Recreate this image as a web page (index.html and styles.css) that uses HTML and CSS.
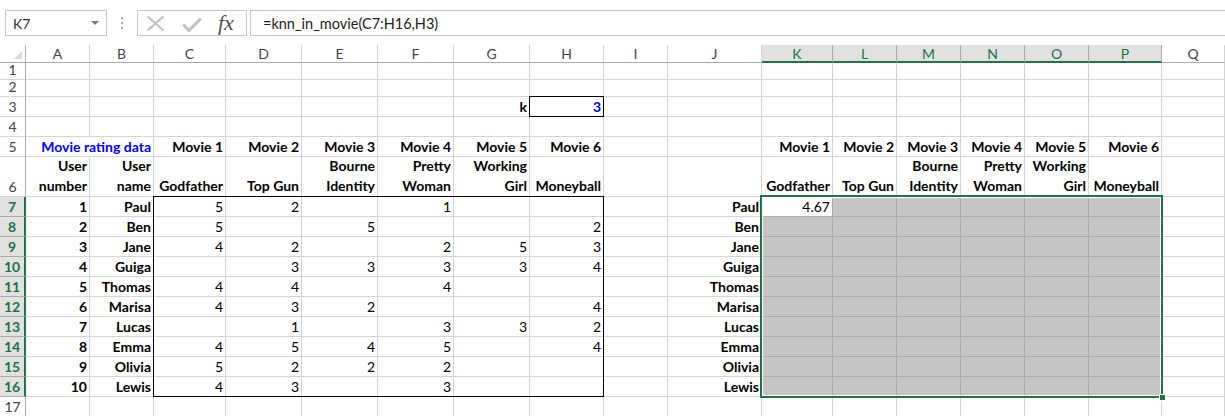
FILE: index.html
```html
<!DOCTYPE html>
<html>
<head>
<meta charset="utf-8">
<link rel="stylesheet" href="styles.css">
</head>
<body>
<div class="topbar">
  <div class="namebox"><span>K7</span><span class="dd"></span></div>
  <div class="dots"><svg width="4" height="26" viewBox="0 0 4 26"><rect x="1" y="7" width="2" height="2" fill="#a8a8a8"/><rect x="1" y="12" width="2" height="2" fill="#a8a8a8"/><rect x="1" y="17" width="2" height="2" fill="#a8a8a8"/></svg></div>
  <div class="fbtns">
    <svg class="fbicons" width="70" height="24" viewBox="0 0 70 24"><path d="M9.5 5.5 L25.5 19.5 M25.5 5.5 L9.5 19.5" stroke="#c2c2c2" stroke-width="2.2" fill="none"/><path d="M45 13.5 L51 19.5 L63 7.5" stroke="#c2c2c2" stroke-width="3" fill="none"/></svg>
    <span class="fx">fx</span>
  </div>
  <div class="formula">=knn_in_movie(C7:H16,H3)</div>
</div>
<div class="sheet">
  <div class="corner"><svg width="10" height="10" viewBox="0 0 10 10"><path d="M9 1 L9 9 L1 9 Z" fill="#dcdcdc"/></svg></div>
  <div class="ch">A</div><div class="ch">B</div><div class="ch">C</div><div class="ch">D</div><div class="ch">E</div><div class="ch">F</div><div class="ch">G</div><div class="ch">H</div><div class="ch">I</div><div class="ch">J</div><div class="ch on">K</div><div class="ch on">L</div><div class="ch on">M</div><div class="ch on">N</div><div class="ch on">O</div><div class="ch on">P</div><div class="ch">Q</div>

  <div class="rh">1</div><div class="c"></div><div class="c"></div><div class="c"></div><div class="c"></div><div class="c"></div><div class="c"></div><div class="c"></div><div class="c"></div><div class="c"></div><div class="c"></div><div class="c"></div><div class="c"></div><div class="c"></div><div class="c"></div><div class="c"></div><div class="c"></div><div class="c"></div>

  <div class="rh">2</div><div class="c"></div><div class="c"></div><div class="c"></div><div class="c"></div><div class="c"></div><div class="c"></div><div class="c"></div><div class="c"></div><div class="c"></div><div class="c"></div><div class="c"></div><div class="c"></div><div class="c"></div><div class="c"></div><div class="c"></div><div class="c"></div><div class="c"></div>

  <div class="rh">3</div><div class="c"></div><div class="c"></div><div class="c"></div><div class="c"></div><div class="c"></div><div class="c"></div><div class="c b">k</div><div class="c b blue">3</div><div class="c"></div><div class="c"></div><div class="c"></div><div class="c"></div><div class="c"></div><div class="c"></div><div class="c"></div><div class="c"></div><div class="c"></div>

  <div class="rh">4</div><div class="c"></div><div class="c"></div><div class="c"></div><div class="c"></div><div class="c"></div><div class="c"></div><div class="c"></div><div class="c"></div><div class="c"></div><div class="c"></div><div class="c"></div><div class="c"></div><div class="c"></div><div class="c"></div><div class="c"></div><div class="c"></div><div class="c"></div>

  <div class="rh">5</div><div class="c nb"></div><div class="c b blue">Movie rating data</div><div class="c b">Movie 1</div><div class="c b">Movie 2</div><div class="c b">Movie 3</div><div class="c b">Movie 4</div><div class="c b">Movie 5</div><div class="c b">Movie 6</div><div class="c"></div><div class="c"></div><div class="c b">Movie 1</div><div class="c b">Movie 2</div><div class="c b">Movie 3</div><div class="c b">Movie 4</div><div class="c b">Movie 5</div><div class="c b">Movie 6</div><div class="c"></div>

  <div class="rh">6</div><div class="c b w">User<br>number</div><div class="c b w">User<br>name</div><div class="c b w">Godfather</div><div class="c b w">Top Gun</div><div class="c b w">Bourne<br>Identity</div><div class="c b w">Pretty<br>Woman</div><div class="c b w">Working<br>Girl</div><div class="c b w">Moneyball</div><div class="c"></div><div class="c"></div><div class="c b w">Godfather</div><div class="c b w">Top Gun</div><div class="c b w">Bourne<br>Identity</div><div class="c b w">Pretty<br>Woman</div><div class="c b w">Working<br>Girl</div><div class="c b w">Moneyball</div><div class="c"></div>

  <div class="rh on">7</div><div class="c b">1</div><div class="c b">Paul</div><div class="c">5</div><div class="c">2</div><div class="c"></div><div class="c">1</div><div class="c"></div><div class="c"></div><div class="c"></div><div class="c b">Paul</div><div class="c active">4.67</div><div class="c sel"></div><div class="c sel"></div><div class="c sel"></div><div class="c sel"></div><div class="c sel"></div><div class="c"></div>

  <div class="rh on">8</div><div class="c b">2</div><div class="c b">Ben</div><div class="c">5</div><div class="c"></div><div class="c">5</div><div class="c"></div><div class="c"></div><div class="c">2</div><div class="c"></div><div class="c b">Ben</div><div class="c sel"></div><div class="c sel"></div><div class="c sel"></div><div class="c sel"></div><div class="c sel"></div><div class="c sel"></div><div class="c"></div>

  <div class="rh on">9</div><div class="c b">3</div><div class="c b">Jane</div><div class="c">4</div><div class="c">2</div><div class="c"></div><div class="c">2</div><div class="c">5</div><div class="c">3</div><div class="c"></div><div class="c b">Jane</div><div class="c sel"></div><div class="c sel"></div><div class="c sel"></div><div class="c sel"></div><div class="c sel"></div><div class="c sel"></div><div class="c"></div>

  <div class="rh on">10</div><div class="c b">4</div><div class="c b">Guiga</div><div class="c"></div><div class="c">3</div><div class="c">3</div><div class="c">3</div><div class="c">3</div><div class="c">4</div><div class="c"></div><div class="c b">Guiga</div><div class="c sel"></div><div class="c sel"></div><div class="c sel"></div><div class="c sel"></div><div class="c sel"></div><div class="c sel"></div><div class="c"></div>

  <div class="rh on">11</div><div class="c b">5</div><div class="c b">Thomas</div><div class="c">4</div><div class="c">4</div><div class="c"></div><div class="c">4</div><div class="c"></div><div class="c"></div><div class="c"></div><div class="c b">Thomas</div><div class="c sel"></div><div class="c sel"></div><div class="c sel"></div><div class="c sel"></div><div class="c sel"></div><div class="c sel"></div><div class="c"></div>

  <div class="rh on">12</div><div class="c b">6</div><div class="c b">Marisa</div><div class="c">4</div><div class="c">3</div><div class="c">2</div><div class="c"></div><div class="c"></div><div class="c">4</div><div class="c"></div><div class="c b">Marisa</div><div class="c sel"></div><div class="c sel"></div><div class="c sel"></div><div class="c sel"></div><div class="c sel"></div><div class="c sel"></div><div class="c"></div>

  <div class="rh on">13</div><div class="c b">7</div><div class="c b">Lucas</div><div class="c"></div><div class="c">1</div><div class="c"></div><div class="c">3</div><div class="c">3</div><div class="c">2</div><div class="c"></div><div class="c b">Lucas</div><div class="c sel"></div><div class="c sel"></div><div class="c sel"></div><div class="c sel"></div><div class="c sel"></div><div class="c sel"></div><div class="c"></div>

  <div class="rh on">14</div><div class="c b">8</div><div class="c b">Emma</div><div class="c">4</div><div class="c">5</div><div class="c">4</div><div class="c">5</div><div class="c"></div><div class="c">4</div><div class="c"></div><div class="c b">Emma</div><div class="c sel"></div><div class="c sel"></div><div class="c sel"></div><div class="c sel"></div><div class="c sel"></div><div class="c sel"></div><div class="c"></div>

  <div class="rh on">15</div><div class="c b">9</div><div class="c b">Olivia</div><div class="c">5</div><div class="c">2</div><div class="c">2</div><div class="c">2</div><div class="c"></div><div class="c"></div><div class="c"></div><div class="c b">Olivia</div><div class="c sel"></div><div class="c sel"></div><div class="c sel"></div><div class="c sel"></div><div class="c sel"></div><div class="c sel"></div><div class="c"></div>

  <div class="rh on">16</div><div class="c b">10</div><div class="c b">Lewis</div><div class="c">4</div><div class="c">3</div><div class="c"></div><div class="c">3</div><div class="c"></div><div class="c"></div><div class="c"></div><div class="c b">Lewis</div><div class="c sel"></div><div class="c sel"></div><div class="c sel"></div><div class="c sel"></div><div class="c sel"></div><div class="c sel"></div><div class="c"></div>

  <div class="rh">17</div><div class="c"></div><div class="c"></div><div class="c"></div><div class="c"></div><div class="c"></div><div class="c"></div><div class="c"></div><div class="c"></div><div class="c"></div><div class="c"></div><div class="c"></div><div class="c"></div><div class="c"></div><div class="c"></div><div class="c"></div><div class="c"></div><div class="c"></div>

  <div class="box-k"></div>
  <div class="box-data"></div>
  <div class="box-sel"><div class="handle"></div></div>
</div>
</body>
</html>
```

FILE: styles.css
```css
* { box-sizing: border-box; }
html, body { margin: 0; padding: 0; background: #fff; }
body {
  width: 1225px;
  height: 416px;
  overflow: hidden;
  font-family: Lato, "Liberation Sans", sans-serif;
}

/* formula bar */
.topbar {
  height: 45px;
  display: flex;
  align-items: flex-start;
  padding: 10px 0 0 5px;
}
.namebox {
  width: 102px;
  height: 26px;
  border: 1px solid #c6c6c6;
  display: flex;
  align-items: center;
  justify-content: space-between;
  padding: 0 7px 0 7px;
  font-size: 14px;
  color: #333;
}
.dd {
  width: 0;
  height: 0;
  border-left: 4px solid transparent;
  border-right: 4px solid transparent;
  border-top: 4px solid #7a7a7a;
}
.dots {
  width: 30px;
  height: 26px;
  display: flex;
  justify-content: center;
}
.fbtns {
  width: 110px;
  height: 26px;
  border: 1px solid #c6c6c6;
  display: flex;
  align-items: center;
}
.fx {
  margin-left: 10px;
  font-family: "Liberation Serif", serif;
  font-style: italic;
  font-size: 22px;
  color: #505050;
  line-height: 24px;
}
.formula {
  flex: 1;
  margin-left: 3px;
  height: 26px;
  border: 1px solid #c6c6c6;
  border-right: 0;
  padding-left: 12px;
  display: flex;
  align-items: center;
  font-size: 14.5px;
  color: #222;
}

/* sheet grid */
.sheet {
  position: relative;
  display: grid;
  grid-template-columns: 26px 64px 64px 72px 76px 76px 76px 76px 74px 64px 94px 71px 64px 64px 64px 64px 73px 63px;
  grid-template-rows: 18px 17px 17px 20px 20px 20px 40px repeat(10, 20px) 20px;
}
.corner {
  border-right: 1px solid #ababab;
  border-bottom: 1px solid #ababab;
  display: flex;
  align-items: flex-end;
  justify-content: flex-end;
  padding: 0 2px 2px 0;
}
.ch {
  border-right: 1px solid #d4d4d4;
  border-bottom: 1px solid #ababab;
  display: flex;
  align-items: center;
  justify-content: center;
  font-size: 14px;
  color: #444;
}
.ch.on {
  background: #e1e1e1;
  color: #217346;
  border-right-color: #ababab;
  border-bottom: 2px solid #217346;
}
.rh {
  border-right: 1px solid #ababab;
  border-bottom: 1px solid #d4d4d4;
  display: flex;
  align-items: flex-end;
  justify-content: center;
  font-size: 14px;
  line-height: 19px;
  color: #444;
}
.rh.on {
  background: #e1e1e1;
  color: #217346;
  font-weight: 700;
  border-right: 2px solid #217346;
  border-bottom-color: #ababab;
}
.c {
  border-right: 1px solid #d4d4d4;
  border-bottom: 1px solid #d4d4d4;
  display: flex;
  align-items: flex-end;
  justify-content: flex-end;
  padding: 0 2px 0 2px;
  font-size: 14px;
  line-height: 19px;
  white-space: nowrap;
  color: #000;
  text-align: right;
}
.c.w { line-height: 20px; }
.b { font-weight: 700; }
.blue { color: #0000ff; }
.nb { border-right-color: transparent; }
.sel {
  background: #c6c6c6;
  border-right-color: #ababab;
  border-bottom-color: #ababab;
}
.active {
  background: #fff;
  border-right-color: #ababab;
  border-bottom-color: #ababab;
}

/* overlay borders */
.box-k {
  position: absolute;
  grid-column: 9 / 10;
  grid-row: 4 / 5;
  top: -1px; left: -1px; right: 0; bottom: 0;
  border: 1px solid #000;
}
.box-data {
  position: absolute;
  grid-column: 4 / 10;
  grid-row: 8 / 18;
  top: -1px; left: -1px; right: 0; bottom: 0;
  border: 1px solid #000;
}
.box-sel {
  position: absolute;
  grid-column: 12 / 18;
  grid-row: 8 / 18;
  top: -2px; left: -2px; right: -1px; bottom: -1px;
  border: 2px solid #217346;
  box-shadow: inset 0 0 0 1px #fff;
}
.handle {
  position: absolute;
  right: -5px;
  bottom: -5px;
  width: 7px;
  height: 7px;
  background: #217346;
  border: 1px solid #fff;
}
```
